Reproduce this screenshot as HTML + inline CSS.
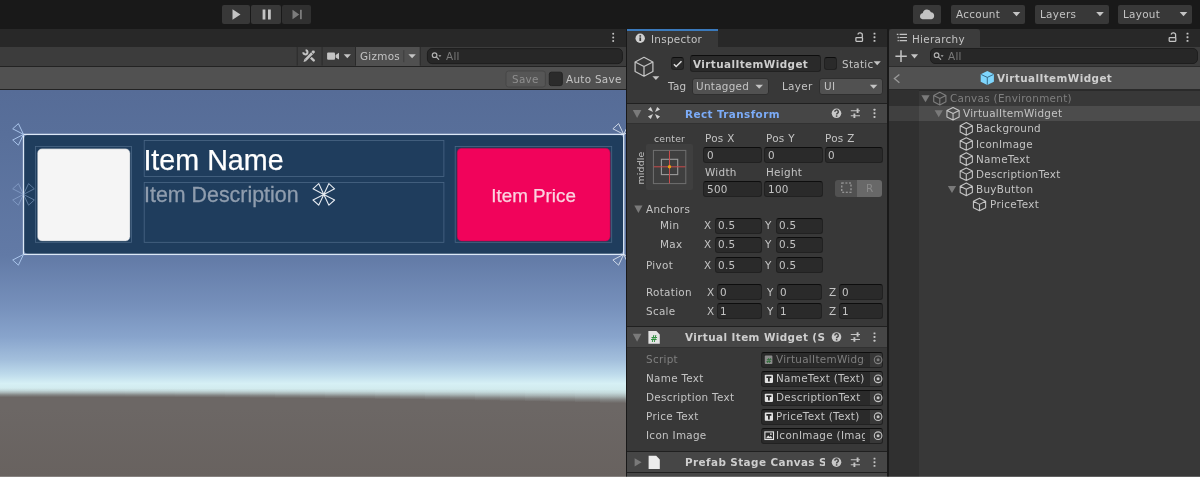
<!DOCTYPE html>
<html><head><meta charset="utf-8"><title>Unity</title>
<style>
html,body{margin:0;padding:0}
body{width:1200px;height:477px;overflow:hidden;position:relative;background:#191919;font-family:"DejaVu Sans","Liberation Sans",sans-serif;font-size:10.4px;letter-spacing:.3px;color:#c4c4c4;line-height:14px}
.a,.a>*{position:absolute}
.a{white-space:nowrap}
.t{will-change:transform;position:absolute;white-space:nowrap;line-height:14px;height:14px}
.b{font-weight:bold;letter-spacing:.42px}
.btn{background:#383838;border-radius:2px}
.dd{background:#515151;border:1px solid #2f2f2f;border-radius:3px;box-sizing:border-box}
.fld{background:#2a2a2a;border:1px solid #212121;border-top-color:#0d0d0d;border-radius:3px;box-sizing:border-box}
.dim{color:#7f7f7f}
svg{position:absolute;overflow:visible}
</style></head><body>
<!-- top toolbar -->
<div class="a btn" style="left:222px;top:5px;width:28px;height:19px;"></div>
<div class="a btn" style="left:251px;top:5px;width:29.7px;height:19px;"></div>
<div class="a btn" style="left:282.2px;top:5px;width:28.8px;height:19px;background:#303030"></div>
<svg style="left:222px;top:5px" width="90" height="19">
<path d="M10.5 4.2 L18.5 9.5 L10.5 14.8Z" fill="#c4c4c4"/>
<rect x="40.6" y="4.5" width="2.8" height="10" fill="#c4c4c4"/><rect x="46" y="4.5" width="2.8" height="10" fill="#c4c4c4"/>
<path d="M70.5 4.8 L77.3 9.5 L70.5 14.2Z" fill="#7c7c7c"/><rect x="78" y="4.8" width="1.8" height="9.4" fill="#7c7c7c"/>
</svg>
<div class="a btn" style="left:913px;top:5px;width:28px;height:19px;"></div>
<svg style="left:913px;top:5px" width="28" height="19"><path d="M9.5 14.2 a3.2 3.2 0 0 1 0.3-6.3 a4.3 4.3 0 0 1 8.2-0.6 a3.5 3.5 0 0 1 0.4 6.9Z" fill="#c4c4c4"/></svg>
<div class="a btn" style="left:951px;top:5px;width:74px;height:19px;"></div>
<div class="t " style="left:956.2px;top:7.2px;">Account</div>
<div class="a btn" style="left:1034.5px;top:5px;width:74px;height:19px;"></div>
<div class="t " style="left:1039.7px;top:7.2px;">Layers</div>
<div class="a btn" style="left:1118px;top:5px;width:74px;height:19px;"></div>
<div class="t " style="left:1123.2px;top:7.2px;">Layout</div>
<svg style="left:0;top:0" width="1200" height="28"><g fill="#c4c4c4"><path d="M1012.7 12 h7.6 l-3.8 4.3z"/><path d="M1096.2 12 h7.6 l-3.8 4.3z"/><path d="M1179.7 12 h7.6 l-3.8 4.3z"/></g></svg>
<!-- scene panel -->
<div class="a" style="left:0px;top:28.5px;width:625.5px;height:18px;background:#282828;"></div>
<div class="a" style="left:0px;top:46.5px;width:625.5px;height:19px;background:#3c3c3c;"></div>
<div class="a" style="left:0px;top:65.5px;width:625.5px;height:1px;background:#232323;"></div>
<div class="a" style="left:0px;top:66.5px;width:625.5px;height:22.5px;background:#515151;"></div>
<div class="a" style="left:0px;top:89px;width:625.5px;height:1px;background:#232323;"></div>
<div id="scene" class="a" style="left:0;top:90px;width:625.5px;height:387px;overflow:hidden;background:linear-gradient(to bottom,#566c97 0px,#586f9a 44px,#627aa6 166px,#7690bb 216px,#88a4cc 247px,#a3bfdc 270px,#bddaeb 284px,#d6f0f5 293.5px,#d1eaed 300px,#cfe6e8 386px)">
<svg style="left:0;top:-90px" width="626" height="477"><defs><linearGradient id="g0" gradientUnits="userSpaceOnUse" x1="0" y1="388.03" x2="0" y2="397.24"><stop offset="0" stop-color="#6c6765" stop-opacity="0"/><stop offset=".25" stop-color="#6c6765" stop-opacity=".13"/><stop offset=".5" stop-color="#6c6765" stop-opacity=".4"/><stop offset=".75" stop-color="#6c6765" stop-opacity=".76"/><stop offset="1" stop-color="#6c6765"/></linearGradient><linearGradient id="g1" gradientUnits="userSpaceOnUse" x1="0" y1="388.09" x2="0" y2="397.19"><stop offset="0" stop-color="#6c6765" stop-opacity="0"/><stop offset=".25" stop-color="#6c6765" stop-opacity=".13"/><stop offset=".5" stop-color="#6c6765" stop-opacity=".4"/><stop offset=".75" stop-color="#6c6765" stop-opacity=".76"/><stop offset="1" stop-color="#6c6765"/></linearGradient><linearGradient id="g2" gradientUnits="userSpaceOnUse" x1="0" y1="388.15" x2="0" y2="397.16"><stop offset="0" stop-color="#6c6765" stop-opacity="0"/><stop offset=".25" stop-color="#6c6765" stop-opacity=".13"/><stop offset=".5" stop-color="#6c6765" stop-opacity=".4"/><stop offset=".75" stop-color="#6c6765" stop-opacity=".76"/><stop offset="1" stop-color="#6c6765"/></linearGradient><linearGradient id="g3" gradientUnits="userSpaceOnUse" x1="0" y1="388.21" x2="0" y2="397.16"><stop offset="0" stop-color="#6c6765" stop-opacity="0"/><stop offset=".25" stop-color="#6c6765" stop-opacity=".13"/><stop offset=".5" stop-color="#6c6765" stop-opacity=".4"/><stop offset=".75" stop-color="#6c6765" stop-opacity=".76"/><stop offset="1" stop-color="#6c6765"/></linearGradient><linearGradient id="g4" gradientUnits="userSpaceOnUse" x1="0" y1="388.27" x2="0" y2="397.19"><stop offset="0" stop-color="#6c6765" stop-opacity="0"/><stop offset=".25" stop-color="#6c6765" stop-opacity=".13"/><stop offset=".5" stop-color="#6c6765" stop-opacity=".4"/><stop offset=".75" stop-color="#6c6765" stop-opacity=".76"/><stop offset="1" stop-color="#6c6765"/></linearGradient><linearGradient id="g5" gradientUnits="userSpaceOnUse" x1="0" y1="388.33" x2="0" y2="397.24"><stop offset="0" stop-color="#6c6765" stop-opacity="0"/><stop offset=".25" stop-color="#6c6765" stop-opacity=".13"/><stop offset=".5" stop-color="#6c6765" stop-opacity=".4"/><stop offset=".75" stop-color="#6c6765" stop-opacity=".76"/><stop offset="1" stop-color="#6c6765"/></linearGradient><linearGradient id="g6" gradientUnits="userSpaceOnUse" x1="0" y1="388.39" x2="0" y2="397.32"><stop offset="0" stop-color="#6c6765" stop-opacity="0"/><stop offset=".25" stop-color="#6c6765" stop-opacity=".13"/><stop offset=".5" stop-color="#6c6765" stop-opacity=".4"/><stop offset=".75" stop-color="#6c6765" stop-opacity=".76"/><stop offset="1" stop-color="#6c6765"/></linearGradient><linearGradient id="g7" gradientUnits="userSpaceOnUse" x1="0" y1="388.45" x2="0" y2="397.42"><stop offset="0" stop-color="#6c6765" stop-opacity="0"/><stop offset=".25" stop-color="#6c6765" stop-opacity=".13"/><stop offset=".5" stop-color="#6c6765" stop-opacity=".4"/><stop offset=".75" stop-color="#6c6765" stop-opacity=".76"/><stop offset="1" stop-color="#6c6765"/></linearGradient><linearGradient id="g8" gradientUnits="userSpaceOnUse" x1="0" y1="388.51" x2="0" y2="397.55"><stop offset="0" stop-color="#6c6765" stop-opacity="0"/><stop offset=".25" stop-color="#6c6765" stop-opacity=".13"/><stop offset=".5" stop-color="#6c6765" stop-opacity=".4"/><stop offset=".75" stop-color="#6c6765" stop-opacity=".76"/><stop offset="1" stop-color="#6c6765"/></linearGradient><linearGradient id="g9" gradientUnits="userSpaceOnUse" x1="0" y1="388.57" x2="0" y2="397.71"><stop offset="0" stop-color="#6c6765" stop-opacity="0"/><stop offset=".25" stop-color="#6c6765" stop-opacity=".13"/><stop offset=".5" stop-color="#6c6765" stop-opacity=".4"/><stop offset=".75" stop-color="#6c6765" stop-opacity=".76"/><stop offset="1" stop-color="#6c6765"/></linearGradient><linearGradient id="g10" gradientUnits="userSpaceOnUse" x1="0" y1="388.63" x2="0" y2="397.89"><stop offset="0" stop-color="#6c6765" stop-opacity="0"/><stop offset=".25" stop-color="#6c6765" stop-opacity=".13"/><stop offset=".5" stop-color="#6c6765" stop-opacity=".4"/><stop offset=".75" stop-color="#6c6765" stop-opacity=".76"/><stop offset="1" stop-color="#6c6765"/></linearGradient><linearGradient id="g11" gradientUnits="userSpaceOnUse" x1="0" y1="388.69" x2="0" y2="398.09"><stop offset="0" stop-color="#6c6765" stop-opacity="0"/><stop offset=".25" stop-color="#6c6765" stop-opacity=".13"/><stop offset=".5" stop-color="#6c6765" stop-opacity=".4"/><stop offset=".75" stop-color="#6c6765" stop-opacity=".76"/><stop offset="1" stop-color="#6c6765"/></linearGradient><linearGradient id="g12" gradientUnits="userSpaceOnUse" x1="0" y1="388.75" x2="0" y2="398.32"><stop offset="0" stop-color="#6c6765" stop-opacity="0"/><stop offset=".25" stop-color="#6c6765" stop-opacity=".13"/><stop offset=".5" stop-color="#6c6765" stop-opacity=".4"/><stop offset=".75" stop-color="#6c6765" stop-opacity=".76"/><stop offset="1" stop-color="#6c6765"/></linearGradient><linearGradient id="g13" gradientUnits="userSpaceOnUse" x1="0" y1="388.81" x2="0" y2="398.58"><stop offset="0" stop-color="#6c6765" stop-opacity="0"/><stop offset=".25" stop-color="#6c6765" stop-opacity=".13"/><stop offset=".5" stop-color="#6c6765" stop-opacity=".4"/><stop offset=".75" stop-color="#6c6765" stop-opacity=".76"/><stop offset="1" stop-color="#6c6765"/></linearGradient><linearGradient id="g14" gradientUnits="userSpaceOnUse" x1="0" y1="388.87" x2="0" y2="398.86"><stop offset="0" stop-color="#6c6765" stop-opacity="0"/><stop offset=".25" stop-color="#6c6765" stop-opacity=".13"/><stop offset=".5" stop-color="#6c6765" stop-opacity=".4"/><stop offset=".75" stop-color="#6c6765" stop-opacity=".76"/><stop offset="1" stop-color="#6c6765"/></linearGradient><linearGradient id="g15" gradientUnits="userSpaceOnUse" x1="0" y1="388.93" x2="0" y2="399.17"><stop offset="0" stop-color="#6c6765" stop-opacity="0"/><stop offset=".25" stop-color="#6c6765" stop-opacity=".13"/><stop offset=".5" stop-color="#6c6765" stop-opacity=".4"/><stop offset=".75" stop-color="#6c6765" stop-opacity=".76"/><stop offset="1" stop-color="#6c6765"/></linearGradient><linearGradient id="g16" gradientUnits="userSpaceOnUse" x1="0" y1="388.99" x2="0" y2="399.50"><stop offset="0" stop-color="#6c6765" stop-opacity="0"/><stop offset=".25" stop-color="#6c6765" stop-opacity=".13"/><stop offset=".5" stop-color="#6c6765" stop-opacity=".4"/><stop offset=".75" stop-color="#6c6765" stop-opacity=".76"/><stop offset="1" stop-color="#6c6765"/></linearGradient><linearGradient id="g17" gradientUnits="userSpaceOnUse" x1="0" y1="389.05" x2="0" y2="399.86"><stop offset="0" stop-color="#6c6765" stop-opacity="0"/><stop offset=".25" stop-color="#6c6765" stop-opacity=".13"/><stop offset=".5" stop-color="#6c6765" stop-opacity=".4"/><stop offset=".75" stop-color="#6c6765" stop-opacity=".76"/><stop offset="1" stop-color="#6c6765"/></linearGradient><linearGradient id="g18" gradientUnits="userSpaceOnUse" x1="0" y1="389.11" x2="0" y2="400.24"><stop offset="0" stop-color="#6c6765" stop-opacity="0"/><stop offset=".25" stop-color="#6c6765" stop-opacity=".13"/><stop offset=".5" stop-color="#6c6765" stop-opacity=".4"/><stop offset=".75" stop-color="#6c6765" stop-opacity=".76"/><stop offset="1" stop-color="#6c6765"/></linearGradient><linearGradient id="g19" gradientUnits="userSpaceOnUse" x1="0" y1="389.17" x2="0" y2="400.65"><stop offset="0" stop-color="#6c6765" stop-opacity="0"/><stop offset=".25" stop-color="#6c6765" stop-opacity=".13"/><stop offset=".5" stop-color="#6c6765" stop-opacity=".4"/><stop offset=".75" stop-color="#6c6765" stop-opacity=".76"/><stop offset="1" stop-color="#6c6765"/></linearGradient><linearGradient id="g20" gradientUnits="userSpaceOnUse" x1="0" y1="389.23" x2="0" y2="401.08"><stop offset="0" stop-color="#6c6765" stop-opacity="0"/><stop offset=".25" stop-color="#6c6765" stop-opacity=".13"/><stop offset=".5" stop-color="#6c6765" stop-opacity=".4"/><stop offset=".75" stop-color="#6c6765" stop-opacity=".76"/><stop offset="1" stop-color="#6c6765"/></linearGradient><linearGradient id="g21" gradientUnits="userSpaceOnUse" x1="0" y1="389.29" x2="0" y2="401.54"><stop offset="0" stop-color="#6c6765" stop-opacity="0"/><stop offset=".25" stop-color="#6c6765" stop-opacity=".13"/><stop offset=".5" stop-color="#6c6765" stop-opacity=".4"/><stop offset=".75" stop-color="#6c6765" stop-opacity=".76"/><stop offset="1" stop-color="#6c6765"/></linearGradient><linearGradient id="g22" gradientUnits="userSpaceOnUse" x1="0" y1="389.35" x2="0" y2="402.03"><stop offset="0" stop-color="#6c6765" stop-opacity="0"/><stop offset=".25" stop-color="#6c6765" stop-opacity=".13"/><stop offset=".5" stop-color="#6c6765" stop-opacity=".4"/><stop offset=".75" stop-color="#6c6765" stop-opacity=".76"/><stop offset="1" stop-color="#6c6765"/></linearGradient><linearGradient id="g23" gradientUnits="userSpaceOnUse" x1="0" y1="389.41" x2="0" y2="402.54"><stop offset="0" stop-color="#6c6765" stop-opacity="0"/><stop offset=".25" stop-color="#6c6765" stop-opacity=".13"/><stop offset=".5" stop-color="#6c6765" stop-opacity=".4"/><stop offset=".75" stop-color="#6c6765" stop-opacity=".76"/><stop offset="1" stop-color="#6c6765"/></linearGradient><linearGradient id="g24" gradientUnits="userSpaceOnUse" x1="0" y1="389.47" x2="0" y2="403.08"><stop offset="0" stop-color="#6c6765" stop-opacity="0"/><stop offset=".25" stop-color="#6c6765" stop-opacity=".13"/><stop offset=".5" stop-color="#6c6765" stop-opacity=".4"/><stop offset=".75" stop-color="#6c6765" stop-opacity=".76"/><stop offset="1" stop-color="#6c6765"/></linearGradient><linearGradient id="g25" gradientUnits="userSpaceOnUse" x1="0" y1="389.53" x2="0" y2="403.64"><stop offset="0" stop-color="#6c6765" stop-opacity="0"/><stop offset=".25" stop-color="#6c6765" stop-opacity=".13"/><stop offset=".5" stop-color="#6c6765" stop-opacity=".4"/><stop offset=".75" stop-color="#6c6765" stop-opacity=".76"/><stop offset="1" stop-color="#6c6765"/></linearGradient><linearGradient id="gg" x1="0" y1="0" x2="0" y2="1"><stop offset="0" stop-color="#6c6765"/><stop offset="1" stop-color="#68625f"/></linearGradient></defs><rect x="0.00" y="388" width="25" height="20" fill="url(#g0)" shape-rendering="crispEdges"/><rect x="25.00" y="388" width="25" height="20" fill="url(#g1)" shape-rendering="crispEdges"/><rect x="50.00" y="388" width="25" height="20" fill="url(#g2)" shape-rendering="crispEdges"/><rect x="75.00" y="388" width="25" height="20" fill="url(#g3)" shape-rendering="crispEdges"/><rect x="100.00" y="388" width="25" height="20" fill="url(#g4)" shape-rendering="crispEdges"/><rect x="125.00" y="388" width="25" height="20" fill="url(#g5)" shape-rendering="crispEdges"/><rect x="150.00" y="388" width="25" height="20" fill="url(#g6)" shape-rendering="crispEdges"/><rect x="175.00" y="388" width="25" height="20" fill="url(#g7)" shape-rendering="crispEdges"/><rect x="200.00" y="388" width="25" height="20" fill="url(#g8)" shape-rendering="crispEdges"/><rect x="225.00" y="388" width="25" height="20" fill="url(#g9)" shape-rendering="crispEdges"/><rect x="250.00" y="388" width="25" height="20" fill="url(#g10)" shape-rendering="crispEdges"/><rect x="275.00" y="388" width="25" height="20" fill="url(#g11)" shape-rendering="crispEdges"/><rect x="300.00" y="388" width="25" height="20" fill="url(#g12)" shape-rendering="crispEdges"/><rect x="325.00" y="388" width="25" height="20" fill="url(#g13)" shape-rendering="crispEdges"/><rect x="350.00" y="388" width="25" height="20" fill="url(#g14)" shape-rendering="crispEdges"/><rect x="375.00" y="388" width="25" height="20" fill="url(#g15)" shape-rendering="crispEdges"/><rect x="400.00" y="388" width="25" height="20" fill="url(#g16)" shape-rendering="crispEdges"/><rect x="425.00" y="388" width="25" height="20" fill="url(#g17)" shape-rendering="crispEdges"/><rect x="450.00" y="388" width="25" height="20" fill="url(#g18)" shape-rendering="crispEdges"/><rect x="475.00" y="388" width="25" height="20" fill="url(#g19)" shape-rendering="crispEdges"/><rect x="500.00" y="388" width="25" height="20" fill="url(#g20)" shape-rendering="crispEdges"/><rect x="525.00" y="388" width="25" height="20" fill="url(#g21)" shape-rendering="crispEdges"/><rect x="550.00" y="388" width="25" height="20" fill="url(#g22)" shape-rendering="crispEdges"/><rect x="575.00" y="388" width="25" height="20" fill="url(#g23)" shape-rendering="crispEdges"/><rect x="600.00" y="388" width="25" height="20" fill="url(#g24)" shape-rendering="crispEdges"/><rect x="625.00" y="388" width="25" height="20" fill="url(#g25)" shape-rendering="crispEdges"/><rect x="0" y="408" width="650" height="70" fill="url(#gg)"/></svg>
<svg style="left:0;top:-90px;will-change:transform" width="626" height="477">
<rect x="24.3" y="135.2" width="598.6" height="118.4" rx="4" fill="#1f3d5d" stroke="#18304b" stroke-opacity=".7" stroke-width=".8"/>
<g fill="none" stroke="#4a6786" stroke-width="0.8">
<rect x="35.5" y="146.5" width="96" height="95.8"/>
<rect x="144.2" y="140.4" width="299.7" height="36"/>
<rect x="144.2" y="182.4" width="299.7" height="59.9"/>
<rect x="455.2" y="146.5" width="156.5" height="95.8"/>
</g>
<rect x="37.5" y="148.8" width="92.5" height="92.2" rx="4.5" fill="#f5f5f5" stroke="#8a96a6" stroke-opacity=".5" stroke-width=".8"/>
<rect x="457.2" y="148.3" width="152.9" height="92.7" rx="4.5" fill="#f1035b" stroke="#b00a4b" stroke-opacity=".55" stroke-width="1"/>
<g font-family="Liberation Sans,sans-serif" letter-spacing="0">
<text x="143.4" y="169.6" font-size="28.7" fill="#ffffff" stroke="#ffffff" stroke-width=".25">Item Name</text>
<text x="144" y="201.9" font-size="21.4" fill="#8f9dae" stroke="#8f9dae" stroke-width=".3">Item Description</text>
<text x="533.6" y="201.8" text-anchor="middle" font-size="18.8" fill="#fbd3df" stroke="#fbd3df" stroke-width=".25">Item Price</text>
</g>
<rect x="23.5" y="134.4" width="600.2" height="120" fill="none" stroke="#dbe8f7" stroke-width="1.3"/>
<g fill="none" stroke="#a9c4ea" stroke-width="1" stroke-linejoin="round">
<path d="M23.5 134.4 l-10.8 -5.6 L18.4 123.60000000000001Z"/><path d="M23.5 134.4 l-10.8 5.6 L18.4 145.20000000000002Z"/><path d="M23.5 254.4 l-10.8 5.6 L18.4 265.2Z"/>
</g>
<g fill="none" stroke="#e8eef6" stroke-width=".9" stroke-linejoin="round" opacity=".9">
<path d="M623.7 134.4 l-10.8 -5.6 L618.6 123.60000000000001Z"/><path d="M623.7 134.4 l10.8 -5.6 L628.8000000000001 123.60000000000001Z"/><path d="M623.7 254.4 l-10.8 5.6 L618.6 265.2Z"/><path d="M623.7 254.4 l10.8 5.6 L628.8000000000001 265.2Z"/>
</g>
<g fill="none" stroke="#a9c4ea" stroke-width="1" stroke-linejoin="round" opacity=".45">
<path d="M23.5 194.4 l-10.8 -5.6 L18.4 183.6Z"/><path d="M23.5 194.4 l-10.8 5.6 L18.4 205.20000000000002Z"/><path d="M23.5 194.4 l10.8 -5.6 L28.6 183.6Z"/><path d="M23.5 194.4 l10.8 5.6 L28.6 205.20000000000002Z"/>
</g>
<g fill="none" stroke="#e6ebf1" stroke-width="1.1" stroke-linejoin="round">
<path d="M323.8 194.4 l-10.8 -5.6 L318.7 183.6Z"/><path d="M323.8 194.4 l-10.8 5.6 L318.7 205.20000000000002Z"/><path d="M323.8 194.4 l10.8 -5.6 L328.90000000000003 183.6Z"/><path d="M323.8 194.4 l10.8 5.6 L328.90000000000003 205.20000000000002Z"/>
</g>
</svg>
</div>
<div class="a" style="left:356px;top:46.5px;width:64px;height:19px;background:#505050;"></div>
<svg style="left:0;top:0" width="626" height="90">
<g stroke="#2a2a2a" stroke-width="1"><path d="M297.2 46.5v19M322.1 46.5v19M355.5 46.5v19M420.2 46.5v19"/><path d="M403.8 50.2v12" stroke="#3d3d3d"/></g>
<g fill="#c4c4c4">
<path d="M408.4 54.2h7.4l-3.7 4.1z"/><path d="M343.7 54.2h7.2l-3.6 4.1z"/>
<rect x="327.1" y="52.6" width="7.9" height="7.2" rx="1"/><path d="M335.6 55 l3.4 -2.2 v6.8 l-3.4 -2.2z"/>
<circle cx="613.2" cy="33.7" r="1"/><circle cx="613.2" cy="37.4" r="1"/><circle cx="613.2" cy="41" r="1"/>
</g>
<g fill="none" stroke="#c4c4c4">
<path d="M307.6 54.6 L313.7 60.4" stroke-width="2.5" stroke-linecap="round"/>
<path d="M303.3 52.3 A2.1 2.1 0 1 0 305.6 50.2" stroke-width="2"/>
<path d="M304.2 61.3 L314.3 50.9" stroke="#3c3c3c" stroke-width="4.6"/>
<path d="M305.6 59.9 L313.7 51.5" stroke-width="2.6"/><circle cx="313.5" cy="51.7" r="1.3" fill="#c4c4c4" stroke="none"/>
<path d="M311.3 52.2 l1.9 1.8" stroke="#3c3c3c" stroke-width=".8"/>
</g>
<path d="M303.5 62 l1.1 -3.2 2.1 2.1z" fill="#c4c4c4"/>
<rect x="427.4" y="48.6" width="195" height="15" rx="4.5" fill="#272727" stroke="#1e1e1e" stroke-width="1"/>
<g fill="none" stroke="#b0b0b0" stroke-width="1.2"><circle cx="434.6" cy="55.2" r="2.3"/><path d="M436.3 56.9l2.4 2.4" stroke-linecap="round"/></g>
<path d="M438.4 55.2h3l-1.5 1.7z" fill="#b0b0b0"/>
<rect x="506" y="71" width="39.4" height="16" rx="2.5" fill="#565656" stroke="#474747" stroke-width="1"/>
<rect x="549.3" y="72.2" width="13" height="13.4" rx="2" fill="#2b2b2b" stroke="#232323" stroke-width="1"/>
</svg>
<div class="t " style="left:359.8px;top:48.8px;">Gizmos</div>
<div class="t " style="left:445.6px;top:49.0px;color:#7a7a7a">All</div>
<div class="t " style="left:511.6px;top:72.2px;color:#8e8e8e">Save</div>
<div class="t " style="left:566px;top:72.2px;">Auto Save</div>
<!-- inspector -->
<div class="a" style="left:627px;top:28.5px;width:260px;height:18px;background:#282828;"></div>
<div class="a" style="left:627px;top:46.5px;width:260px;height:431px;background:#383838;"></div>
<div class="a" style="left:627px;top:28.5px;width:90.5px;height:18px;background:#383838;"></div>
<div class="a" style="left:627px;top:28.5px;width:90.5px;height:2px;background:#3a79bb;"></div>
<div class="t " style="left:650.7px;top:31.7px;">Inspector</div>
<div class="a fld" style="left:671.2px;top:57px;width:13px;height:13px;"></div>
<div class="a fld" style="left:690.4px;top:55.3px;width:130.4px;height:16.8px;"></div>
<div class="t b" style="left:693px;top:57.0px;color:#cecece">VirtualItemWidget</div>
<div class="a fld" style="left:824.2px;top:57px;width:13px;height:13px;"></div>
<div class="t " style="left:842px;top:57.0px;">Static</div>
<div class="t " style="left:667.8px;top:79.2px;">Tag</div>
<div class="a dd" style="left:692.4px;top:78.1px;width:76.2px;height:16.7px;"></div>
<div class="t " style="left:696px;top:79.2px;">Untagged</div>
<div class="t " style="left:781.7px;top:79.2px;">Layer</div>
<div class="a dd" style="left:819.3px;top:78.1px;width:63.3px;height:16.7px;"></div>
<div class="t " style="left:823.5px;top:79.2px;">UI</div>
<div class="a" style="left:627px;top:102.5px;width:260px;height:1px;background:#202020;"></div>
<div class="a" style="left:627px;top:103.5px;width:260px;height:19.700000000000003px;background:#464646;"></div>
<div class="a" style="left:627px;top:123.2px;width:260px;height:0.8px;background:#313131;"></div>
<div class="a" style="left:627px;top:326.4px;width:260px;height:1px;background:#202020;"></div>
<div class="a" style="left:627px;top:327.4px;width:260px;height:19.200000000000045px;background:#464646;"></div>
<div class="a" style="left:627px;top:346.6px;width:260px;height:0.8px;background:#313131;"></div>
<div class="a" style="left:627px;top:451.4px;width:260px;height:1px;background:#202020;"></div>
<div class="a" style="left:627px;top:452.4px;width:260px;height:19.600000000000023px;background:#464646;"></div>
<div class="a" style="left:627px;top:472px;width:260px;height:0.8px;background:#313131;"></div>
<div class="a" style="left:627px;top:472.2px;width:260px;height:1px;background:#202020;"></div>
<div class="a" style="left:627px;top:473.2px;width:260px;height:4px;background:#464646;"></div>
<div class="t b" style="left:684.8px;top:106.6px;color:#7cacf8">Rect Transform</div>
<div class="t b" style="left:684.8px;top:330.4px;width:140px;overflow:hidden;color:#cecece">Virtual Item Widget (Script)</div>
<div class="t b" style="left:684.8px;top:455.4px;width:140px;overflow:hidden;color:#cecece">Prefab Stage Canvas Scaler</div>
<div class="a" style="left:646.3px;top:143.6px;width:46.6px;height:46.2px;background:#3f3f3f;border-radius:2px"></div>
<div class="t" style="left:653.6px;top:132px;font-size:9.3px;letter-spacing:.2px">center</div>
<div class="t" style="left:624.3px;top:160.6px;width:34px;text-align:center;font-size:9.3px;letter-spacing:.2px;transform:rotate(-90deg);transform-origin:50% 50%">middle</div>
<div class="t " style="left:704.8px;top:130.6px;">Pos X</div>
<div class="t " style="left:765.7px;top:130.6px;">Pos Y</div>
<div class="t " style="left:825.3px;top:130.6px;">Pos Z</div>
<div class="a fld" style="left:703.4px;top:147px;width:58.4px;height:16.3px;"></div>
<div class="t " style="left:706.6px;top:147.7px;">0</div>
<div class="a fld" style="left:764.3px;top:147px;width:58.4px;height:16.3px;"></div>
<div class="t " style="left:767.5px;top:147.7px;">0</div>
<div class="a fld" style="left:824.5px;top:147px;width:58.4px;height:16.3px;"></div>
<div class="t " style="left:827.7px;top:147.7px;">0</div>
<div class="t " style="left:704.8px;top:164.6px;">Width</div>
<div class="t " style="left:765.7px;top:164.6px;">Height</div>
<div class="a fld" style="left:703.4px;top:181px;width:58.4px;height:16.3px;"></div>
<div class="t " style="left:706.6px;top:181.7px;">500</div>
<div class="a fld" style="left:764.3px;top:181px;width:58.4px;height:16.3px;"></div>
<div class="t " style="left:767.5px;top:181.7px;">100</div>
<div class="a" style="left:834.5px;top:179.8px;width:22.6px;height:17px;background:#515151;border-radius:3px 0 0 3px"></div>
<div class="a" style="left:857.1px;top:179.8px;width:25.3px;height:17px;background:#686868;border-radius:0 3px 3px 0"></div>
<div class="t " style="left:866.2px;top:181.3px;color:#8a8a8a">R</div>
<div class="t " style="left:645.5px;top:202.0px;">Anchors</div>
<div class="t " style="left:659.6px;top:218.0px;">Min</div>
<div class="t " style="left:704.4px;top:218.0px;">X</div>
<div class="t " style="left:765.3px;top:218.0px;">Y</div>
<div class="a fld" style="left:714.8px;top:217.6px;width:46.8px;height:16.2px;"></div>
<div class="t " style="left:718.0px;top:218.0px;">0.5</div>
<div class="a fld" style="left:775.7px;top:217.6px;width:47px;height:16.2px;"></div>
<div class="t " style="left:778.9000000000001px;top:218.0px;">0.5</div>
<div class="t " style="left:659.6px;top:237.0px;">Max</div>
<div class="t " style="left:704.4px;top:237.0px;">X</div>
<div class="t " style="left:765.3px;top:237.0px;">Y</div>
<div class="a fld" style="left:714.8px;top:236.6px;width:46.8px;height:16.2px;"></div>
<div class="t " style="left:718.0px;top:237.0px;">0.5</div>
<div class="a fld" style="left:775.7px;top:236.6px;width:47px;height:16.2px;"></div>
<div class="t " style="left:778.9000000000001px;top:237.0px;">0.5</div>
<div class="t " style="left:645.5px;top:257.7px;">Pivot</div>
<div class="t " style="left:704.4px;top:257.7px;">X</div>
<div class="t " style="left:765.3px;top:257.7px;">Y</div>
<div class="a fld" style="left:714.8px;top:257.3px;width:46.8px;height:16.2px;"></div>
<div class="t " style="left:718.0px;top:257.7px;">0.5</div>
<div class="a fld" style="left:775.7px;top:257.3px;width:47px;height:16.2px;"></div>
<div class="t " style="left:778.9000000000001px;top:257.7px;">0.5</div>
<div class="t " style="left:645.5px;top:284.6px;">Rotation</div>
<div class="t " style="left:707.2px;top:284.6px;">X</div>
<div class="t " style="left:767.3px;top:284.6px;">Y</div>
<div class="t " style="left:828.8px;top:284.6px;">Z</div>
<div class="a fld" style="left:717.1px;top:284.2px;width:44.5px;height:16.2px;"></div>
<div class="t " style="left:720.3000000000001px;top:284.6px;">0</div>
<div class="a fld" style="left:777.1px;top:284.2px;width:44.8px;height:16.2px;"></div>
<div class="t " style="left:780.3000000000001px;top:284.6px;">0</div>
<div class="a fld" style="left:838.6px;top:284.2px;width:44.1px;height:16.2px;"></div>
<div class="t " style="left:841.8000000000001px;top:284.6px;">0</div>
<div class="t " style="left:645.5px;top:303.6px;">Scale</div>
<div class="t " style="left:707.2px;top:303.6px;">X</div>
<div class="t " style="left:767.3px;top:303.6px;">Y</div>
<div class="t " style="left:828.8px;top:303.6px;">Z</div>
<div class="a fld" style="left:717.1px;top:303.2px;width:44.5px;height:16.2px;"></div>
<div class="t " style="left:720.3000000000001px;top:303.6px;">1</div>
<div class="a fld" style="left:777.1px;top:303.2px;width:44.8px;height:16.2px;"></div>
<div class="t " style="left:780.3000000000001px;top:303.6px;">1</div>
<div class="a fld" style="left:838.6px;top:303.2px;width:44.1px;height:16.2px;"></div>
<div class="t " style="left:841.8000000000001px;top:303.6px;">1</div>
<div class="t dim" style="left:645.6px;top:352.3px;">Script</div>
<div class="a fld" style="left:760.6px;top:351.7px;width:122.2px;height:16.2px;"></div>
<div class="a" style="left:869.6px;top:352.7px;width:12.4px;height:14.2px;background:#383838;border-radius:0 2px 2px 0"></div>
<div class="t dim" style="left:775.6px;top:352.3px;width:89.4px;overflow:hidden">VirtualItemWidget</div>
<div class="t " style="left:645.6px;top:371.3px;">Name Text</div>
<div class="a fld" style="left:760.6px;top:370.7px;width:122.2px;height:16.2px;"></div>
<div class="a" style="left:869.6px;top:371.7px;width:12.4px;height:14.2px;background:#383838;border-radius:0 2px 2px 0"></div>
<div class="t " style="left:775.6px;top:371.3px;width:89.4px;overflow:hidden">NameText (Text)</div>
<div class="t " style="left:645.6px;top:390.3px;">Description Text</div>
<div class="a fld" style="left:760.6px;top:389.7px;width:122.2px;height:16.2px;"></div>
<div class="a" style="left:869.6px;top:390.7px;width:12.4px;height:14.2px;background:#383838;border-radius:0 2px 2px 0"></div>
<div class="t " style="left:775.6px;top:390.3px;width:89.4px;overflow:hidden">DescriptionText (Text)</div>
<div class="t " style="left:645.6px;top:409.2px;">Price Text</div>
<div class="a fld" style="left:760.6px;top:408.6px;width:122.2px;height:16.2px;"></div>
<div class="a" style="left:869.6px;top:409.6px;width:12.4px;height:14.2px;background:#383838;border-radius:0 2px 2px 0"></div>
<div class="t " style="left:775.6px;top:409.2px;width:89.4px;overflow:hidden">PriceText (Text)</div>
<div class="t " style="left:645.6px;top:428.2px;">Icon Image</div>
<div class="a fld" style="left:760.6px;top:427.6px;width:122.2px;height:16.2px;"></div>
<div class="a" style="left:869.6px;top:428.6px;width:12.4px;height:14.2px;background:#383838;border-radius:0 2px 2px 0"></div>
<div class="t " style="left:775.6px;top:428.2px;width:89.4px;overflow:hidden">IconImage (Image)</div>
<!-- hierarchy -->
<div class="a" style="left:889px;top:28.5px;width:311px;height:18px;background:#282828;"></div>
<div class="a" style="left:889px;top:46.5px;width:311px;height:431px;background:#383838;"></div>
<div class="a" style="left:889px;top:28.5px;width:91px;height:18px;background:#3c3c3c;border-radius:3px 3px 0 0"></div>
<div class="a" style="left:889px;top:46.5px;width:311px;height:19px;background:#3c3c3c;"></div>
<div class="a" style="left:889px;top:65.5px;width:311px;height:1.3px;background:#2c2c2c;"></div>
<div class="a" style="left:889px;top:66.8px;width:311px;height:22.4px;background:#515151;"></div>
<div class="a" style="left:889px;top:89.2px;width:311px;height:1.4px;background:#2a2a2a;"></div>
<div class="a" style="left:889px;top:90.2px;width:30px;height:387px;background:#303030;"></div>
<div class="a" style="left:889px;top:105.72999999999999px;width:30px;height:15.13px;background:#404040;"></div>
<div class="a" style="left:919px;top:105.72999999999999px;width:281px;height:15.13px;background:#4c4c4c;"></div>
<div class="a" style="left:929.8px;top:48.1px;width:268px;height:15.8px;box-sizing:border-box;background:#272727;border:1px solid #1e1e1e;border-radius:5px"></div>
<div class="t " style="left:912px;top:31.7px;">Hierarchy</div>
<div class="t " style="left:948.2px;top:49.0px;color:#7a7a7a">All</div>
<div class="t b" style="left:996.8px;top:70.9px;color:#cecece">VirtualItemWidget</div>
<div class="t dim" style="left:950.0px;top:91.1px;">Canvas (Environment)</div>
<div class="t " style="left:963.24px;top:106.2px;">VirtualItemWidget</div>
<div class="t " style="left:976.48px;top:121.4px;">Background</div>
<div class="t " style="left:976.48px;top:136.5px;">IconImage</div>
<div class="t " style="left:976.48px;top:151.6px;">NameText</div>
<div class="t " style="left:976.48px;top:166.8px;">DescriptionText</div>
<div class="t " style="left:976.48px;top:181.9px;">BuyButton</div>
<div class="t " style="left:989.72px;top:197.0px;">PriceText</div>
<div class="a" style="left:0px;top:475.6px;width:1200px;height:1.4px;background:rgba(255,255,255,.2);"></div>
<svg style="left:0;top:0;will-change:transform" width="1200" height="477" font-family="DejaVu Sans,sans-serif"><circle cx="640.2" cy="38.3" r="4.7" fill="#d0d0d0"/><rect x="639.4" y="37.4" width="1.7" height="3.6" fill="#383838"/><rect x="639.4" y="35.2" width="1.7" height="1.5" fill="#383838"/>
<g fill="none" stroke="#c4c4c4" stroke-width="1.25"><rect x="855.9" y="37.5" width="6.6" height="3.8" rx=".5"/><path d="M862.3 37.5 v-2.1 a2.3 2.3 0 0 0 -4.5 -0.9"/></g>
<rect x="873.55" y="32.65" width="1.9" height="1.9" rx=".4" fill="#c4c4c4"/>
<rect x="873.55" y="36.25" width="1.9" height="1.9" rx=".4" fill="#c4c4c4"/>
<rect x="873.55" y="39.949999999999996" width="1.9" height="1.9" rx=".4" fill="#c4c4c4"/>
<path d="M644 57.3 l8.9 4.6305 v9.639 l-8.9 4.6305 l-8.9 -4.6305 v-9.639z M635.1 61.930499999999995 L644 66.56099999999999 L652.9 61.930499999999995 M644 66.56099999999999 V76.19999999999999" fill="none" stroke="#c4c4c4" stroke-width="1.25" stroke-linejoin="round" opacity="1"/>
<path d="M652.4 76.3h7l-3.5 3.8z" fill="#c4c4c4"/>
<path d="M673.9 64.2 L676.2 66.5 L681.5 61.3" fill="none" stroke="#dcdcdc" stroke-width="1.5"/>
<path d="M873.6 61.3h7.2l-3.6 4z" fill="#c4c4c4"/>
<path d="M755.4 84.8h7.6l-3.8 4z" fill="#c4c4c4"/>
<path d="M869.8 84.8h7.6l-3.8 4z" fill="#c4c4c4"/>
<path d="M632.8 110.0h8.6l-4.3 8z" fill="#7a7a7a"/>
<circle cx="836.5" cy="113.3" r="4.8" fill="#c8c8c8"/><path d="M834.9 111.89999999999999 a1.7 1.7 0 1 1 2.5 1.4 q-.8 .5 -.8 1.3" fill="none" stroke="#464646" stroke-width="1.5"/><rect x="835.85" y="115.3" width="1.5" height="1.5" fill="#464646"/>
<g stroke="#c4c4c4" fill="none"><path d="M850.8 110.8h9.2M850.8 115.8h9.2" stroke-width="1.1"/><path d="M857.6 108.6v4.4M854.4 113.6v4.4" stroke-width="1.9"/></g>
<rect x="873.55" y="108.75" width="1.9" height="1.9" rx=".4" fill="#c4c4c4"/>
<rect x="873.55" y="112.35" width="1.9" height="1.9" rx=".4" fill="#c4c4c4"/>
<rect x="873.55" y="116.05" width="1.9" height="1.9" rx=".4" fill="#c4c4c4"/>
<path d="M632.8 333.7h8.6l-4.3 8z" fill="#7a7a7a"/>
<circle cx="836.5" cy="337" r="4.8" fill="#c8c8c8"/><path d="M834.9 335.6 a1.7 1.7 0 1 1 2.5 1.4 q-.8 .5 -.8 1.3" fill="none" stroke="#464646" stroke-width="1.5"/><rect x="835.85" y="339" width="1.5" height="1.5" fill="#464646"/>
<g stroke="#c4c4c4" fill="none"><path d="M850.8 334.5h9.2M850.8 339.5h9.2" stroke-width="1.1"/><path d="M857.6 332.3v4.4M854.4 337.3v4.4" stroke-width="1.9"/></g>
<rect x="873.55" y="332.45" width="1.9" height="1.9" rx=".4" fill="#c4c4c4"/>
<rect x="873.55" y="336.05" width="1.9" height="1.9" rx=".4" fill="#c4c4c4"/>
<rect x="873.55" y="339.75" width="1.9" height="1.9" rx=".4" fill="#c4c4c4"/>
<path d="M634.6 458.2v8.2l7 -4.1z" fill="#7a7a7a"/>
<circle cx="836.5" cy="462.2" r="4.8" fill="#c8c8c8"/><path d="M834.9 460.8 a1.7 1.7 0 1 1 2.5 1.4 q-.8 .5 -.8 1.3" fill="none" stroke="#464646" stroke-width="1.5"/><rect x="835.85" y="464.2" width="1.5" height="1.5" fill="#464646"/>
<g stroke="#c4c4c4" fill="none"><path d="M850.8 459.7h9.2M850.8 464.7h9.2" stroke-width="1.1"/><path d="M857.6 457.5v4.4M854.4 462.5v4.4" stroke-width="1.9"/></g>
<rect x="873.55" y="457.65" width="1.9" height="1.9" rx=".4" fill="#c4c4c4"/>
<rect x="873.55" y="461.25" width="1.9" height="1.9" rx=".4" fill="#c4c4c4"/>
<rect x="873.55" y="464.95" width="1.9" height="1.9" rx=".4" fill="#c4c4c4"/>
<path d="M647.9 109.4 L650.8 106.9 L653 111.9z" fill="#d2d2d2"/>
<path d="M647.9 116.6 L650.8 119.1 L653 114.1z" fill="#d2d2d2"/>
<path d="M660.1 109.4 L657.2 106.9 L655 111.9z" fill="#d2d2d2"/>
<path d="M660.1 116.6 L657.2 119.1 L655 114.1z" fill="#d2d2d2"/>
<path d="M648.4 331 h8 l3.4 3.4 v9.3 h-11.4z" fill="#e4e4e4"/><text x="650.6" y="341.6" font-size="8.5" font-weight="bold" fill="#2f8f3f" letter-spacing="0">#</text>
<path d="M648.6 455.8 h7.6 l3.6 3.6 v9.6 h-11.2z" fill="#ececec"/>
<g fill="none"><rect x="653.4" y="150.4" width="32.4" height="33.2" stroke="#707070" stroke-width="1"/><rect x="661.4" y="159.3" width="16.3" height="15.3" stroke="#9c9c9c" stroke-width="1.1"/><path d="M669.5 150.8v32.6M653.8 166.8h31.6" stroke="#c94a4a" stroke-width="1"/></g><circle cx="669.5" cy="166.8" r="1.7" fill="#e8a011"/>
<rect x="841.8" y="183" width="9.2" height="9.2" fill="none" stroke="#a8a8a8" stroke-width="1.1" stroke-dasharray="2 1.6"/>
<path d="M634.3 205.6h8.2l-4.1 7.4z" fill="#7a7a7a"/>
<circle cx="878.1" cy="359.8" r="3.8" fill="none" stroke="#7f7f7f" stroke-width="1.1"/><circle cx="878.1" cy="359.8" r="1.5" fill="#7f7f7f"/>
<rect x="764.8" y="355.6" width="7.6" height="8.4" rx=".8" fill="#8a8a8a"/><text x="766.1" y="362.7" font-size="7" font-weight="bold" fill="#2c6e38" letter-spacing="0">#</text>
<circle cx="878.1" cy="378.8" r="3.8" fill="none" stroke="#c4c4c4" stroke-width="1.1"/><circle cx="878.1" cy="378.8" r="1.5" fill="#c4c4c4"/>
<rect x="764.8" y="374.7" width="8.2" height="8.2" rx=".8" fill="#e2e2e2"/><path d="M766.4 376.2h5v1.7h-1.6v3.7h-1.8v-3.7h-1.6z" fill="#2a2a2a"/>
<circle cx="878.1" cy="397.8" r="3.8" fill="none" stroke="#c4c4c4" stroke-width="1.1"/><circle cx="878.1" cy="397.8" r="1.5" fill="#c4c4c4"/>
<rect x="764.8" y="393.7" width="8.2" height="8.2" rx=".8" fill="#e2e2e2"/><path d="M766.4 395.2h5v1.7h-1.6v3.7h-1.8v-3.7h-1.6z" fill="#2a2a2a"/>
<circle cx="878.1" cy="416.70000000000005" r="3.8" fill="none" stroke="#c4c4c4" stroke-width="1.1"/><circle cx="878.1" cy="416.70000000000005" r="1.5" fill="#c4c4c4"/>
<rect x="764.8" y="412.6" width="8.2" height="8.2" rx=".8" fill="#e2e2e2"/><path d="M766.4 414.1h5v1.7h-1.6v3.7h-1.8v-3.7h-1.6z" fill="#2a2a2a"/>
<circle cx="878.1" cy="435.70000000000005" r="3.8" fill="none" stroke="#c4c4c4" stroke-width="1.1"/><circle cx="878.1" cy="435.70000000000005" r="1.5" fill="#c4c4c4"/>
<rect x="764.9" y="431.90000000000003" width="8.6" height="7.6" fill="none" stroke="#e2e2e2" stroke-width="1.1"/><path d="M766 438.30000000000007 l2.2 -2.8 1.5 1.6 1 -1 1.8 2.2z" fill="#e2e2e2"/><circle cx="770.9" cy="434.1" r=".9" fill="#e2e2e2"/>
<g stroke="#c4c4c4" stroke-width="1.1"><path d="M899.6 34.4h7.4M899.6 37.5h7.4M899.6 40.6h7.4"/><path d="M896.8 34.4h1.6M897.6 37.5h1.2M897.6 40.6h1.2" stroke-width="1.4"/></g>
<g fill="none" stroke="#c4c4c4" stroke-width="1.25"><rect x="1169.2" y="37.5" width="6.6" height="3.8" rx=".5"/><path d="M1175.6 37.5 v-2.1 a2.3 2.3 0 0 0 -4.5 -0.9"/></g>
<rect x="1186.55" y="32.65" width="1.9" height="1.9" rx=".4" fill="#c4c4c4"/>
<rect x="1186.55" y="36.25" width="1.9" height="1.9" rx=".4" fill="#c4c4c4"/>
<rect x="1186.55" y="39.949999999999996" width="1.9" height="1.9" rx=".4" fill="#c4c4c4"/>
<path d="M901 50.3v11.6M895.4 56.2h11.4" stroke="#c4c4c4" stroke-width="1.5"/>
<path d="M910.9 54.2h7.2l-3.6 4.2z" fill="#c4c4c4"/>
<g fill="none" stroke="#b0b0b0" stroke-width="1.2"><circle cx="936.6" cy="55.2" r="2.3"/><path d="M938.3 56.9l2.4 2.4" stroke-linecap="round"/></g><path d="M940.6 55.2h3l-1.5 1.7z" fill="#b0b0b0"/>
<path d="M899.4 74.5 l-5 4.1 5 4.1" fill="none" stroke="#9a9a9a" stroke-width="1.3"/>
<path d="M987.3 70.9 l6.6 3.3 v7.6 l-6.6 3.3 -6.6 -3.3 v-7.6z" fill="#7fd6fd"/><path d="M981.2 74.5 L987.3 77.4 L993.4 74.5 M987.3 77.4 V84.8" fill="none" stroke="#2f5f7c" stroke-width=".9"/>
<path d="M939.8 92.3 l6.1 3.0869999999999997 v6.426 l-6.1 3.0869999999999997 l-6.1 -3.0869999999999997 v-6.426z M933.6999999999999 95.387 L939.8 98.47399999999999 L945.9 95.387 M939.8 98.47399999999999 V104.89999999999999" fill="none" stroke="#c4c4c4" stroke-width="1.1" stroke-linejoin="round" opacity="0.5"/>
<path d="M921.4 95.19999999999999h8.2l-4.1 7z" fill="#7a7a7a"/>
<path d="M953.04 107.42999999999999 l6.1 3.0869999999999997 v6.426 l-6.1 3.0869999999999997 l-6.1 -3.0869999999999997 v-6.426z M946.9399999999999 110.517 L953.04 113.60399999999998 L959.14 110.517 M953.04 113.60399999999998 V120.02999999999999" fill="none" stroke="#c4c4c4" stroke-width="1.1" stroke-linejoin="round" opacity="1"/>
<path d="M934.64 110.32999999999998h8.2l-4.1 7z" fill="#7a7a7a"/>
<path d="M966.28 122.56 l6.1 3.0869999999999997 v6.426 l-6.1 3.0869999999999997 l-6.1 -3.0869999999999997 v-6.426z M960.18 125.647 L966.28 128.734 L972.38 125.647 M966.28 128.734 V135.16" fill="none" stroke="#c4c4c4" stroke-width="1.1" stroke-linejoin="round" opacity="1"/>
<path d="M966.28 137.69 l6.1 3.0869999999999997 v6.426 l-6.1 3.0869999999999997 l-6.1 -3.0869999999999997 v-6.426z M960.18 140.777 L966.28 143.864 L972.38 140.777 M966.28 143.864 V150.29" fill="none" stroke="#c4c4c4" stroke-width="1.1" stroke-linejoin="round" opacity="1"/>
<path d="M966.28 152.82 l6.1 3.0869999999999997 v6.426 l-6.1 3.0869999999999997 l-6.1 -3.0869999999999997 v-6.426z M960.18 155.90699999999998 L966.28 158.994 L972.38 155.90699999999998 M966.28 158.994 V165.42" fill="none" stroke="#c4c4c4" stroke-width="1.1" stroke-linejoin="round" opacity="1"/>
<path d="M966.28 167.95 l6.1 3.0869999999999997 v6.426 l-6.1 3.0869999999999997 l-6.1 -3.0869999999999997 v-6.426z M960.18 171.03699999999998 L966.28 174.124 L972.38 171.03699999999998 M966.28 174.124 V180.54999999999998" fill="none" stroke="#c4c4c4" stroke-width="1.1" stroke-linejoin="round" opacity="1"/>
<path d="M966.28 183.07999999999998 l6.1 3.0869999999999997 v6.426 l-6.1 3.0869999999999997 l-6.1 -3.0869999999999997 v-6.426z M960.18 186.16699999999997 L966.28 189.254 L972.38 186.16699999999997 M966.28 189.254 V195.67999999999998" fill="none" stroke="#c4c4c4" stroke-width="1.1" stroke-linejoin="round" opacity="1"/>
<path d="M947.88 185.98h8.2l-4.1 7z" fill="#7a7a7a"/>
<path d="M979.52 198.20999999999998 l6.1 3.0869999999999997 v6.426 l-6.1 3.0869999999999997 l-6.1 -3.0869999999999997 v-6.426z M973.42 201.29699999999997 L979.52 204.384 L985.62 201.29699999999997 M979.52 204.384 V210.80999999999997" fill="none" stroke="#c4c4c4" stroke-width="1.1" stroke-linejoin="round" opacity="1"/></svg>
</body></html>
